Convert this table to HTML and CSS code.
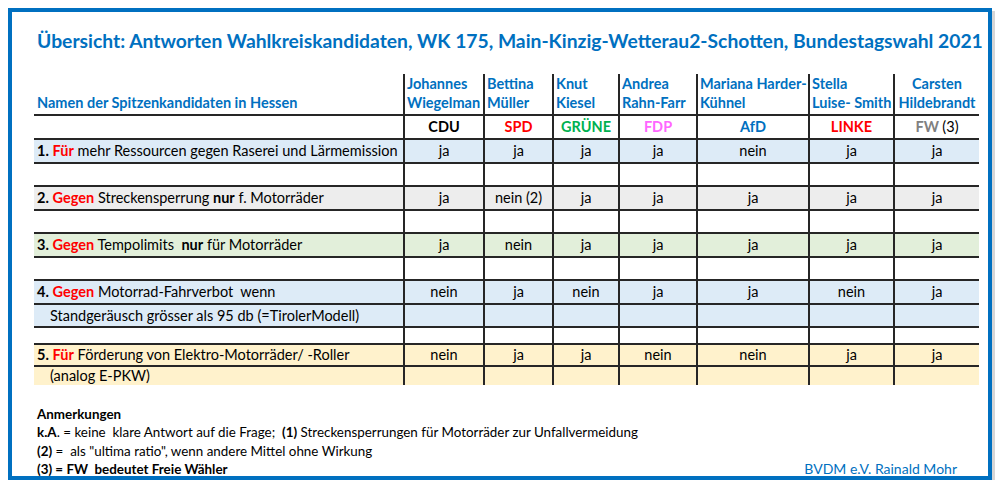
FILE: index.html
```html
<!DOCTYPE html>
<html lang="de">
<head>
<meta charset="utf-8">
<title>Übersicht Wahlkreiskandidaten</title>
<link rel="stylesheet" href="styles.css">
</head>
<body>
<div class="frame">
  <div class="title">Übersicht: Antworten Wahlkreiskandidaten, WK 175, Main-Kinzig-Wetterau2-Schotten, Bundestagswahl 2021</div>
  <table class="grid">
    <colgroup>
      <col class="c0"><col class="c1"><col class="c2"><col class="c3"><col class="c4"><col class="c5"><col class="c6"><col class="c7">
    </colgroup>
    <tr class="r-head">
      <td class="q hq">Namen der Spitzenkandidaten in Hessen</td>
      <td class="name">Johannes<br>Wiegelman</td>
      <td class="name">Bettina<br>Müller</td>
      <td class="name">Knut<br>Kiesel</td>
      <td class="name">Andrea<br>Rahn-Farr</td>
      <td class="name">Mariana Harder-<br>Kühnel</td>
      <td class="name">Stella<br>Luise- Smith</td>
      <td class="name center">Carsten<br>Hildebrandt</td>
    </tr>
    <tr class="r-party">
      <td class="q"></td>
      <td class="party cdu">CDU</td>
      <td class="party spd">SPD</td>
      <td class="party gruene">GRÜNE</td>
      <td class="party fdp">FDP</td>
      <td class="party afd">AfD</td>
      <td class="party linke">LINKE</td>
      <td class="party fw">FW <span class="fn">(3)</span></td>
    </tr>
    <tr class="r-q blue">
      <td class="q"><b>1.</b> <b class="red">Für</b> mehr Ressourcen gegen Raserei und Lärmemission</td>
      <td>ja</td><td>ja</td><td>ja</td><td>ja</td><td>nein</td><td>ja</td><td>ja</td>
    </tr>
    <tr class="r-blank"><td class="q"></td><td></td><td></td><td></td><td></td><td></td><td></td><td></td></tr>
    <tr class="r-q grey">
      <td class="q"><b>2.</b> <b class="red">Gegen</b> Streckensperrung <b>nur</b> f. Motorräder</td>
      <td>ja</td><td>nein (2)</td><td>ja</td><td>ja</td><td>ja</td><td>ja</td><td>ja</td>
    </tr>
    <tr class="r-blank"><td class="q"></td><td></td><td></td><td></td><td></td><td></td><td></td><td></td></tr>
    <tr class="r-q green">
      <td class="q"><b>3.</b> <b class="red">Gegen</b> Tempolimits  <b>nur</b> für Motorräder</td>
      <td>ja</td><td>nein</td><td>ja</td><td>ja</td><td>ja</td><td>ja</td><td>ja</td>
    </tr>
    <tr class="r-blank"><td class="q"></td><td></td><td></td><td></td><td></td><td></td><td></td><td></td></tr>
    <tr class="r-q blue">
      <td class="q"><b>4.</b> <b class="red">Gegen</b> Motorrad-Fahrverbot  wenn</td>
      <td>nein</td><td>ja</td><td>nein</td><td>ja</td><td>ja</td><td>nein</td><td>ja</td>
    </tr>
    <tr class="r-sub blue">
      <td class="q sub">Standgeräusch grösser als 95 db (=TirolerModell)</td>
      <td></td><td></td><td></td><td></td><td></td><td></td><td></td>
    </tr>
    <tr class="r-blank short"><td class="q"></td><td></td><td></td><td></td><td></td><td></td><td></td><td></td></tr>
    <tr class="r-q5 yellow">
      <td class="q"><b>5.</b> <b class="red">Für</b> Förderung von Elektro-Motorräder/ -Roller</td>
      <td>nein</td><td>ja</td><td>ja</td><td>nein</td><td>nein</td><td>ja</td><td>ja</td>
    </tr>
    <tr class="r-sub5 yellow">
      <td class="q sub">(analog E-PKW)</td>
      <td></td><td></td><td></td><td></td><td></td><td></td><td></td>
    </tr>
  </table>
  <div class="notes">
    <div class="note-line"><b>Anmerkungen</b></div>
    <div class="note-line"><b>k.A</b>. = keine  klare Antwort auf die Frage;  <b>(1)</b> Streckensperrungen für Motorräder zur Unfallvermeidung</div>
    <div class="note-line"><b>(2)</b> =  als "ultima ratio", wenn andere Mittel ohne Wirkung</div>
    <div class="note-last">
      <div class="note-line"><b>(3) = FW  bedeutet Freie Wähler</b></div>
      <div class="sign">BVDM e.V. Rainald Mohr</div>
    </div>
  </div>
</div>
</body>
</html>
```

FILE: styles.css
```css
html, body {
  margin: 0;
  padding: 0;
  background: #ffffff;
}

body {
  font-family: Lato, "Open Sans", "Liberation Sans", sans-serif;
  color: #000;
}

.frame {
  box-sizing: border-box;
  margin: 8px 0 0 8px;
  width: 984px;
  height: 472px;
  border: 4px solid #0070c0;
  box-shadow: 3px 3px 0 #d6d6d6;
  padding: 17px 0 0 22px;
}

.title {
  font-weight: bold;
  color: #0070c0;
  font-size: 19.3px;
  line-height: 24px;
  margin: 0 0 21px 3px;
  white-space: nowrap;
}

.grid {
  border-collapse: collapse;
  table-layout: fixed;
  width: 945px;
}

.c0 { width: 370px; }
.c1 { width: 80px; }
.c2 { width: 69px; }
.c3 { width: 66px; }
.c4 { width: 78px; }
.c5 { width: 112px; }
.c6 { width: 85px; }
.c7 { width: 85px; }

.grid td {
  padding: 0 2px;
  border-left: 2px solid #262626;
  border-top: 2px solid #262626;
  font-size: 14.5px;
  line-height: 18px;
  text-align: center;
  vertical-align: middle;
  white-space: pre;
  overflow: hidden;
}

.grid td.q {
  border-left: none;
  text-align: left;
  padding-left: 3px;
}

.grid td.sub {
  padding-left: 16px;
}

.r-head td {
  border-top: none;
  height: 36px;
  vertical-align: bottom;
  line-height: 19px;
  padding-bottom: 2px;
  font-weight: bold;
  color: #0070c0;
  text-align: left;
}

.r-head td.center { text-align: center; }

.r-party td { height: 22px; }
.r-q td { height: 22px; }
.r-blank td { height: 21px; }
.r-blank.short td { height: 15px; }
.r-sub td { height: 21px; }
.r-q5 td { height: 20px; }
.r-sub5 td { height: 17px; }

.party {
  font-weight: bold;
  font-size: 16.5px;
}

.cdu { color: #000; }
.spd { color: #ff0000; }
.gruene { color: #00b050; }
.fdp { color: #ff66ff; }
.afd { color: #0070c0; }
.linke { color: #ff0000; }
.fw { color: #808080; }
.fn { color: #000; font-weight: normal; font-size: 14.5px; }

.red { color: #ff0000; }

.blue td { background: #ddebf7; }
.grey td { background: #ededed; }
.green td { background: #e2efda; }
.yellow td { background: #fff2cc; }

.notes {
  margin: 20px 0 0 3px;
  font-size: 13.4px;
  line-height: 18.3px;
}

.note-line {
  white-space: pre;
}

.note-last {
  display: flex;
  justify-content: space-between;
  width: 942px;
}

.sign {
  color: #0070c0;
  font-size: 14px;
  margin-right: 22px;
}
```
